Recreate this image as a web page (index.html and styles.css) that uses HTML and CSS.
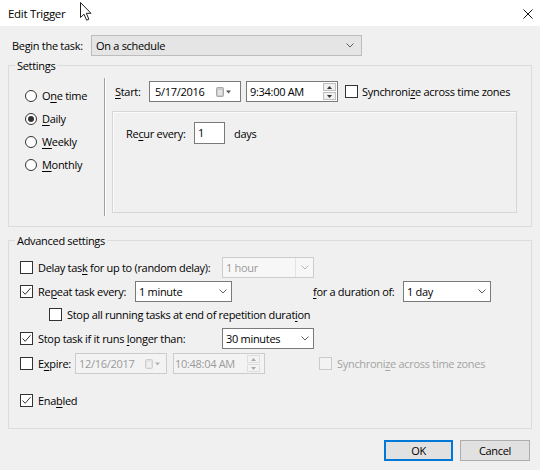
FILE: index.html
```html
<!DOCTYPE html>
<html>
<head>
<meta charset="utf-8">
<title>Edit Trigger</title>
<link rel="stylesheet" href="styles.css">
</head>
<body>
<div class="titlebar">
  <span class="title">Edit Trigger</span>
  <svg class="close" width="10" height="10" viewBox="0 0 10 10"><path d="M0.5 0.5L9.5 9.5M9.5 0.5L0.5 9.5" stroke="#111" stroke-width="1" fill="none"/></svg>
</div>
<svg class="cursor" width="14" height="21" viewBox="0 0 14 21"><path d="M1.5 1.5L1.5 16.5L5 13.2L7.6 19.2L9.9 18.2L7.3 12.3L12 12.3Z" fill="#fff" stroke="#222" stroke-width="1" stroke-linejoin="round"/></svg>

<div class="begin-row">
  <span class="begin-label">Begin the task:</span>
  <div class="select"><span>On a schedule</span>
    <svg class="chev" width="8" height="5" viewBox="0 0 8 5"><path d="M0.5 0.5L4 4L7.5 0.5" stroke="#606060" fill="none"/></svg>
  </div>
</div>

<div class="group settings">
  <div class="group-title">Settings</div>
  <div class="settings-inner">
    <div class="freq">
      <div class="radio-row"><span class="radio"></span><span>O<u>n</u>e time</span></div>
      <div class="radio-row"><span class="radio on"></span><span><u>D</u>aily</span></div>
      <div class="radio-row"><span class="radio"></span><span><u>W</u>eekly</span></div>
      <div class="radio-row"><span class="radio"></span><span><u>M</u>onthly</span></div>
    </div>
    <div class="vsep"></div>
    <div class="schedule">
      <div class="start-row">
        <span class="start-label"><u>S</u>tart:</span>
        <div class="field date"><span>5/17/2016</span>
          <svg width="16" height="10" viewBox="0 0 16 10"><rect x="0.5" y="0.5" width="7" height="9" rx="1" fill="#c9c9c9" stroke="#a8a8a8"/><rect x="2" y="3" width="4" height="5" fill="#e4e4e4"/><path d="M10 3.5L15 3.5L12.5 6.5Z" fill="#555"/></svg>
        </div>
        <div class="field time"><span>9:34:00 AM</span>
          <div class="spin">
            <span><svg width="5" height="3" viewBox="0 0 5 3"><path d="M0 3L2.5 0L5 3Z" fill="#333"/></svg></span>
            <span><svg width="5" height="3" viewBox="0 0 5 3"><path d="M0 0L2.5 3L5 0Z" fill="#333"/></svg></span>
          </div>
        </div>
        <div class="sync"><span class="check"></span><span>Synchroni<u>z</u>e across time zones</span></div>
      </div>
      <div class="recur-panel">
        <div class="recur-row">
          <span class="recur-label">Re<u>c</u>ur every:</span>
          <div class="num">1</div>
          <span class="days">days</span>
        </div>
      </div>
    </div>
  </div>
</div>

<div class="group advanced">
  <div class="group-title">Advanced settings</div>
  <div class="adv-inner">
    <div class="row r1">
      <div class="cl w202"><span class="check"></span><span>Delay tas<u>k</u> for up to (random delay):</span></div>
      <div class="combo dis w92"><span>1 hour</span>
        <span class="dbtn"><svg width="8" height="5" viewBox="0 0 8 5"><path d="M0.5 0.5L4 4L7.5 0.5" stroke="#b5b5b5" fill="none"/></svg></span>
      </div>
    </div>
    <div class="row r2">
      <div class="cl w115"><span class="check on"><svg width="11" height="11" viewBox="0 0 11 11"><path d="M1.5 5.5L4.2 8.3L9.5 2.2" stroke="#333" stroke-width="1" fill="none"/></svg></span><span>Re<u>p</u>eat task every:</span></div>
      <div class="combo w97"><span>1 minute</span>
        <svg width="8" height="5" viewBox="0 0 8 5"><path d="M0.5 0.5L4 4L7.5 0.5" stroke="#606060" fill="none"/></svg>
      </div>
      <span class="dur-label"><u>f</u>or a duration of:</span>
      <div class="combo w88"><span>1 day</span>
        <svg width="8" height="5" viewBox="0 0 8 5"><path d="M0.5 0.5L4 4L7.5 0.5" stroke="#606060" fill="none"/></svg>
      </div>
    </div>
    <div class="row r3">
      <div class="cl indent"><span class="check"></span><span>Stop all running tasks at end of repetition durat<u>i</u>on</span></div>
    </div>
    <div class="row r4">
      <div class="cl w202"><span class="check on"><svg width="11" height="11" viewBox="0 0 11 11"><path d="M1.5 5.5L4.2 8.3L9.5 2.2" stroke="#333" stroke-width="1" fill="none"/></svg></span><span>Stop task if it runs <u>l</u>onger than:</span></div>
      <div class="combo w92"><span>30 minutes</span>
        <svg width="8" height="5" viewBox="0 0 8 5"><path d="M0.5 0.5L4 4L7.5 0.5" stroke="#606060" fill="none"/></svg>
      </div>
    </div>
    <div class="row r5">
      <div class="cl w55"><span class="check"></span><span>E<u>x</u>pire:</span></div>
      <div class="field date dis"><span>12/16/2017</span>
        <svg width="16" height="10" viewBox="0 0 16 10"><rect x="0.5" y="0.5" width="7" height="9" rx="1" fill="#e2e2e2" stroke="#cfcfcf"/><rect x="2" y="3" width="4" height="5" fill="#f0f0f0"/><path d="M10 3.5L15 3.5L12.5 6.5Z" fill="#b0b0b0"/></svg>
      </div>
      <div class="field time dis"><span>10:48:04 AM</span>
        <div class="spin">
          <span><svg width="5" height="3" viewBox="0 0 5 3"><path d="M0 3L2.5 0L5 3Z" fill="#aaa"/></svg></span>
          <span><svg width="5" height="3" viewBox="0 0 5 3"><path d="M0 0L2.5 3L5 0Z" fill="#aaa"/></svg></span>
        </div>
      </div>
      <div class="sync sync-dis"><span class="check dis"></span><span>Synchroni<u>z</u>e across time zones</span></div>
    </div>
    <div class="row r6">
      <div class="cl"><span class="check on"><svg width="11" height="11" viewBox="0 0 11 11"><path d="M1.5 5.5L4.2 8.3L9.5 2.2" stroke="#333" stroke-width="1" fill="none"/></svg></span><span>Ena<u>b</u>led</span></div>
    </div>
  </div>
</div>

<div class="buttons">
  <button class="btn default">OK</button>
  <button class="btn cancel">Cancel</button>
</div>
</body>
</html>
```

FILE: styles.css
```css
* { box-sizing: border-box; }
html, body { margin: 0; padding: 0; }
body {
  width: 540px;
  height: 470px;
  background: #f0f0f0;
  font-family: "Open Sans", "Noto Sans", sans-serif;
  font-size: 11px;
  line-height: 15px;
  letter-spacing: -0.3px;
  color: #000;
  overflow: hidden;
  position: relative;
  white-space: nowrap;
}
u { text-decoration-thickness: 1px; text-underline-offset: 2px; }

.titlebar {
  height: 26px;
  background: #fff;
  display: flex;
  align-items: center;
  justify-content: space-between;
  padding: 0 7px 0 8px;
}
.title { font-size: 11.5px; }
.close { display: block; margin-top: 1px; }
.cursor { position: absolute; left: 79px; top: 1px; }

.begin-row {
  display: flex;
  align-items: center;
  height: 21px;
  margin: 9px 0 0 12px;
}
.begin-label { width: 79px; }
.select {
  width: 271px;
  height: 21px;
  background: #e5e5e5;
  border: 1px solid #bdbdbd;
  display: flex;
  align-items: center;
  justify-content: space-between;
  padding: 0 7px 0 4px;
}
.chev { display: block; }

.group {
  margin: 0 8px;
  border: 1px solid #dcdcdc;
}
.group-title {
  margin: -8px 0 -7px 6px;
  padding: 0 2px;
  height: 15px;
  line-height: 15px;
  width: max-content;
  background: #f0f0f0;
}
.settings { margin-top: 9px; }
.settings-inner {
  display: flex;
  height: 160px;
  padding: 12px 0 10px 0;
}
.freq { width: 95px; padding: 6px 0 0 16px; }
.radio-row { display: flex; align-items: center; gap: 5px; height: 23px; }
.radio {
  width: 12px;
  height: 12px;
  border: 1px solid #333;
  border-radius: 50%;
  background: #fff;
  display: flex;
  align-items: center;
  justify-content: center;
  flex: none;
}
.radio.on::after {
  content: "";
  width: 6px;
  height: 6px;
  border-radius: 50%;
  background: #333;
}
.vsep { width: 2px; background: #a0a0a0; border-right: 1px solid #fff; }

.schedule { padding: 3px 0 0 6px; }
.start-row { display: flex; align-items: center; height: 21px; padding-left: 3px; }
.start-label { width: 34px; }
.field {
  height: 21px;
  border: 1px solid #7a7a7a;
  background: #fff;
  display: flex;
  align-items: center;
  justify-content: space-between;
  flex: none;
}
.field svg { display: block; }
.date { width: 92px; padding: 0 8px 0 5px; }
.time { width: 92px; margin-left: 5px; padding: 0 1px 0 3px; }
.spin { width: 13px; height: 17px; display: flex; flex-direction: column; gap: 1px; }
.spin span {
  flex: 1;
  border: 1px solid #bfbfbf;
  background: #f0f0f0;
  display: flex;
  align-items: center;
  justify-content: center;
}
.check {
  width: 13px;
  height: 13px;
  border: 1px solid #333;
  background: #fff;
  flex: none;
  display: flex;
  align-items: center;
  justify-content: center;
}
.check svg { display: block; }
.check.dis { border-color: #cacaca; background: #f3f3f3; }
.sync { display: flex; align-items: center; gap: 4px; margin-left: 7px; }

.recur-panel {
  margin-top: 9px;
  width: 405px;
  height: 102px;
  border: 1px solid #d6d6d6;
  box-shadow: inset 1px 1px 0 #fbfbfb;
  padding: 10px 0 0 13px;
}
.recur-row { display: flex; align-items: center; height: 22px; }
.recur-label { width: 68px; }
.num {
  width: 31px;
  height: 22px;
  border: 1px solid #7a7a7a;
  background: #fff;
  padding-left: 3px;
  line-height: 20px;
}
.days { margin-left: 9px; }

.advanced { margin-top: 13px; }
.adv-inner {
  display: flex;
  flex-direction: column;
  padding: 16px 0 17px 11px;
}
.row { display: flex; align-items: center; height: 21px; }
.r2 { margin-top: 3px; }
.r3 { margin-top: 2px; }
.r4 { margin-top: 3px; }
.r5 { margin-top: 4px; }
.r6 { margin-top: 16px; }
.cl { display: flex; align-items: center; gap: 5px; flex: none; }
.w202 { width: 202px; }
.w115 { width: 115px; }
.w55 { width: 55px; }
.indent { margin-left: 29px; }

.combo {
  height: 21px;
  border: 1px solid #7a7a7a;
  background: #fff;
  display: flex;
  align-items: center;
  justify-content: space-between;
  padding: 0 4px 0 3px;
  flex: none;
}
.combo svg { display: block; }
.w92 { width: 92px; }
.w97 { width: 97px; }
.w88 { width: 88px; }
.combo.dis {
  border-color: #cccccc;
  background: #f7f7f7;
  color: #9a9a9a;
  padding: 0 0 0 3px;
}
.dbtn {
  width: 18px;
  height: 19px;
  border-left: 1px solid #e3e3e3;
  display: flex;
  align-items: center;
  justify-content: center;
}
.dur-label { margin-left: 81px; width: 90px; }

.field.dis { border-color: #cccccc; background: #f3f3f3; color: #9a9a9a; }
.date.dis { padding: 0 5px 0 3px; }
.time.dis { margin-left: 6px; padding: 0 4px 0 1px; }
.time.dis .spin span { border-color: #dedede; background: #f3f3f3; }
.sync-dis { margin-left: 54px; color: #a3a3a3; gap: 5px; }

.buttons {
  display: flex;
  justify-content: flex-end;
  gap: 7px;
  margin-top: 11px;
  padding-right: 10px;
}
.btn {
  height: 21px;
  width: 70px;
  background: #e1e1e1;
  border: 1px solid #adadad;
  font-family: "Open Sans", "Noto Sans", sans-serif;
  font-size: 11px;
  letter-spacing: -0.3px;
  color: #000;
  padding: 0;
  margin: 0;
  line-height: 15px;
}
.btn.default {
  width: 69px;
  border-color: #0078d7;
  box-shadow: inset 0 0 0 1px #0078d7;
}
```
